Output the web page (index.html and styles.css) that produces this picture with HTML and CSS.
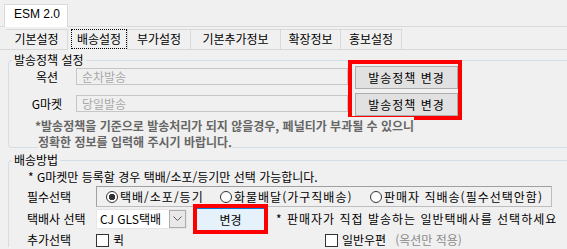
FILE: index.html
```html
<!DOCTYPE html>
<html lang="ko">

<head>
<meta charset="UTF-8" />
<title>ESM 2.0 - 배송설정</title>
<link rel="stylesheet" href="styles.css">
</head>
<body>

  <div class="top-tabs">
    <div class="top-tab">ESM 2.0</div>
  </div>

  <div class="top-page">
    <div class="sub-tabs">
      <div class="sub-tab t1">기본설정</div>
      <div class="sub-tab t2 active"><span class="focus">배송설정</span></div>
      <div class="sub-tab t3">부가설정</div>
      <div class="sub-tab t4">기본추가정보</div>
      <div class="sub-tab t5">확장정보</div>
      <div class="sub-tab t6">홍보설정</div>
    </div>

    <fieldset class="group policy">
      <legend>발송정책 설정</legend>
      <div class="policy-body">
        <div class="policy-fields">
          <div class="field-row">
            <span class="field-label">옥션</span>
            <div class="textbox">순차발송</div>
          </div>
          <div class="field-row">
            <span class="field-label">G마켓</span>
            <div class="textbox">당일발송</div>
          </div>
        </div>
        <div class="mark-box policy-buttons">
          <button class="win-btn">발송정책 변경</button>
          <button class="win-btn">발송정책 변경</button>
        </div>
      </div>
      <p class="policy-note">
        <span class="note-line">*발송정책을 기준으로 발송처리가 되지 않을경우, 페널티가 부과될 수 있으니</span><br>
        <span class="note-line second">정확한 정보를 입력해 주시기 바랍니다.</span>
      </p>
    </fieldset>

    <fieldset class="group delivery">
      <legend>배송방법</legend>
      <div class="info">* G마켓만 등록할 경우 택배/소포/등기만 선택 가능합니다.</div>

      <div class="form-row radio-row">
        <span class="row-label">필수선택</span>
        <div class="radio-panel">
          <label class="radio r1"><span class="circle checked"></span>택배/소포/등기</label>
          <label class="radio r2"><span class="circle"></span>화물배달(가구직배송)</label>
          <label class="radio r3"><span class="circle"></span>판매자 직배송(필수선택안함)</label>
        </div>
      </div>

      <div class="form-row combo-row">
        <span class="row-label">택배사 선택</span>
        <div class="combo">
          <span class="combo-text">CJ GLS택배</span>
          <span class="combo-drop">
            <svg width="9" height="6" viewBox="0 0 9 6"><polyline points="0.5,0.5 4.5,4.5 8.5,0.5" fill="none" stroke="#606060" stroke-width="1"/></svg>
          </span>
        </div>
        <div class="mark-box change-box">
          <button class="change-btn">변경</button>
        </div>
        <span class="combo-note">* 판매자가 직접 발송하는 일반택배사를 선택하세요</span>
      </div>

      <div class="form-row check-row">
        <span class="row-label">추가선택</span>
        <label class="check first"><span class="box"></span>퀵</label>
        <label class="check"><span class="box"></span>일반우편<span class="muted">(옥션만 적용)</span></label>
      </div>
    </fieldset>
  </div>

</body>
</html>
```

FILE: styles.css
```css
html, body {
  margin: 0;
  overflow: hidden;
}

body {
  background-color: #f0f0f0;
  font-family: "Noto Sans CJK KR", sans-serif;
  font-size: 12px;
  line-height: 14px;
  color: #000;
}

/* outer tab control */
.top-tabs {
  display: flex;
  padding: 4px 0 0 4px;
  height: 22px;
}

.top-tab {
  position: relative;
  z-index: 1;
  box-sizing: border-box;
  width: 64px;
  height: 23px;
  padding-left: 9px;
  border: 1px solid #d9d9d9;
  border-bottom: none;
  background: #fff;
  font-family: "Liberation Sans", Arial, sans-serif;
  line-height: 18px;
}

.top-page {
  border-top: 1px solid #d9d9d9;
}

/* inner tab strip */
.sub-tabs {
  display: flex;
  height: 20px;
  margin-top: 2px;
  padding-left: 6px;
  border-bottom: 1px solid #d9d9d9;
}

.sub-tab {
  box-sizing: border-box;
  height: 20px;
  border-top: 1px solid #d9d9d9;
  border-right: 1px solid #d9d9d9;
  text-align: center;
  line-height: 18px;
}

.t1 { width: 62px; }
.t2 { width: 61px; }
.t3 { width: 63px; }
.t4 { width: 90px; }
.t5 { width: 60px; }
.t6 { width: 61px; }

.sub-tab.active {
  position: relative;
  height: 21px;
  margin-bottom: -1px;
  margin-left: -1px;
  padding-left: 3px;
  border-top: none;
  border-left: 1px solid #d9d9d9;
  background: #f0f0f0;
}

.focus {
  display: block;
  box-sizing: border-box;
  height: 20px;
  border: 1px dotted #000;
  line-height: 17px;
}

/* group boxes - right edge runs off the window */
.group {
  min-width: 0;
  margin: 0 0 0 8px;
  padding: 0;
  border: 1px solid #d5dde6;
  border-right: none;
  border-radius: 4px 0 0 4px;
}

.group legend {
  height: 14px;
  margin-left: 3px;
  padding: 0 2px;
  line-height: 14px;
}

.policy {
  margin-top: 3px;
}

.delivery {
  margin-top: 5px;
  border-bottom: none;
  border-radius: 4px 0 0 0;
}

.policy-body {
  display: flex;
  align-items: flex-start;
}

.policy-fields {
  margin-top: 1px;
}

.field-row {
  display: flex;
  align-items: center;
  height: 17px;
}

.field-row + .field-row {
  margin-top: 10px;
}

.field-label {
  width: 58px;
  margin-left: 9px;
  text-align: center;
}

.textbox {
  box-sizing: border-box;
  width: 272px;
  height: 17px;
  padding-left: 5px;
  border: 1px solid #c6c6c6;
  color: #a8a8a8;
  line-height: 15px;
}

.mark-box {
  border: 4px solid #ff0000;
}

.policy-buttons {
  display: flex;
  flex-direction: column;
  gap: 4px;
  margin-top: -7px;
  padding: 2px 0 0 3px;
}

.win-btn {
  width: 103px;
  height: 23px;
  padding: 0;
  border: 1px solid #adadad;
  background: #e1e1e1;
  font-family: inherit;
  font-size: 12px;
  letter-spacing: 1px;
  color: #000;
}

.policy-note {
  margin: -2px 0 -3px 26px;
  font-weight: bold;
  color: #666;
  line-height: 16px;
}

.note-line {
  background: #f0f0f0;
}

.note-line.second {
  margin-left: 3px;
}

/* delivery section */
.info {
  margin: 3px 0 0 19px;
}

.form-row {
  display: flex;
  align-items: center;
  padding-left: 18px;
}

.row-label {
  width: 69px;
  flex-shrink: 0;
}

.radio-row {
  margin-top: 2px;
}

.radio-panel {
  display: flex;
  align-items: center;
  box-sizing: border-box;
  width: 456px;
  height: 21px;
  padding-left: 9px;
  border: 1px solid #bdbdbd;
  border-top-color: #a0a0a0;
  border-left-color: #a0a0a0;
  letter-spacing: 1px;
}

.radio {
  display: flex;
  align-items: center;
  gap: 2px;
}

.r1 { width: 114px; }
.r2 { width: 150px; }

.circle {
  box-sizing: border-box;
  width: 12px;
  height: 12px;
  border: 1px solid #333;
  border-radius: 50%;
  background: #fff;
}

.circle.checked {
  background: radial-gradient(circle, #333 0 3px, #fff 3.5px);
}

.combo-row {
  height: 30px;
  margin-top: -3px;
}

.combo {
  display: flex;
  align-items: center;
  box-sizing: border-box;
  width: 91px;
  height: 20px;
  border: 1px solid #e6e6e6;
  background: #fff;
}

.combo-text {
  padding-left: 3px;
}

.combo-drop {
  display: flex;
  align-items: center;
  justify-content: center;
  box-sizing: border-box;
  width: 17px;
  height: 18px;
  margin-left: auto;
  border: 1px solid #adadad;
  background: #e8e8e8;
}

.change-box {
  margin-left: 6px;
}

.change-btn {
  display: block;
  width: 67px;
  height: 22px;
  padding: 0;
  border: none;
  border-top: 1px solid #0078d7;
  background: #e5f1fb;
  font-family: inherit;
  font-size: 12px;
  color: #000;
}

.combo-note {
  margin-left: 8px;
  letter-spacing: 1px;
}

.check-row {
  margin-top: -1px;
}

.check {
  display: flex;
  align-items: center;
  gap: 4px;
}

.check.first {
  width: 229px;
}

.box {
  box-sizing: border-box;
  width: 13px;
  height: 13px;
  border: 1px solid #333;
  background: #fff;
}

.muted {
  margin-left: 5px;
  color: #8c8c8c;
}
```
